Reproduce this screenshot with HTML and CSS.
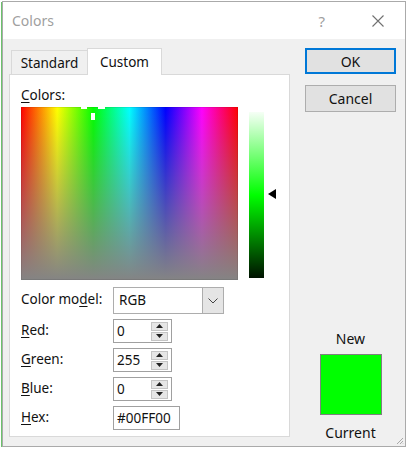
FILE: index.html
```html
<!DOCTYPE html>
<html lang="en">
<head>
  <meta charset="UTF-8">
  <title>Colors</title>
  <link rel="stylesheet" href="styles.css">
</head>
<body>

  <div class="dialog">
    <div class="titlebar">
      <span class="title">Colors</span>
      <span class="help">?</span>
      <svg class="close" width="12" height="12" viewBox="0 0 12 12">
        <path d="M0.5 0.5 L11.5 11.5 M11.5 0.5 L0.5 11.5" stroke="#707070" stroke-width="1.1" fill="none"/>
      </svg>
    </div>

    <div class="content">
      <div class="left-col">
        <div class="tabs">
          <div class="tab">Standard</div>
          <div class="tab active">Custom</div>
        </div>

        <div class="panel">
          <div class="panel-label"><u>C</u>olors:</div>

          <div class="picker">
            <div class="spectrum">
              <!-- crosshair sits at hue 120, saturation 255 -->
              <div class="cross cross-left"></div>
              <div class="cross cross-right"></div>
              <div class="cross cross-down"></div>
            </div>
            <div class="lum-wrap">
              <div class="lum-bar"></div>
              <div class="lum-arrow"></div>
            </div>
          </div>

          <div class="form">
            <label>Color mo<u>d</u>el:</label>
            <div class="select">
              <span class="select-value">RGB</span>
              <span class="select-btn">
                <svg width="10" height="6" viewBox="0 0 10 6"><path d="M0.5 0.5 L5 5 L9.5 0.5" stroke="#444" fill="none"/></svg>
              </span>
            </div>

            <label><u>R</u>ed:</label>
            <div class="spin">
              <span class="spin-value">0</span>
              <span class="spin-btns">
                <span class="spin-btn"><svg width="7" height="4" viewBox="0 0 7 4"><path d="M0 4 L3.5 0 L7 4 Z" fill="#222"/></svg></span>
                <span class="spin-btn"><svg width="7" height="4" viewBox="0 0 7 4"><path d="M0 0 L3.5 4 L7 0 Z" fill="#222"/></svg></span>
              </span>
            </div>

            <label><u>G</u>reen:</label>
            <div class="spin">
              <span class="spin-value">255</span>
              <span class="spin-btns">
                <span class="spin-btn"><svg width="7" height="4" viewBox="0 0 7 4"><path d="M0 4 L3.5 0 L7 4 Z" fill="#222"/></svg></span>
                <span class="spin-btn"><svg width="7" height="4" viewBox="0 0 7 4"><path d="M0 0 L3.5 4 L7 0 Z" fill="#222"/></svg></span>
              </span>
            </div>

            <label><u>B</u>lue:</label>
            <div class="spin">
              <span class="spin-value">0</span>
              <span class="spin-btns">
                <span class="spin-btn"><svg width="7" height="4" viewBox="0 0 7 4"><path d="M0 4 L3.5 0 L7 4 Z" fill="#222"/></svg></span>
                <span class="spin-btn"><svg width="7" height="4" viewBox="0 0 7 4"><path d="M0 0 L3.5 4 L7 0 Z" fill="#222"/></svg></span>
              </span>
            </div>

            <label><u>H</u>ex:</label>
            <div class="hex">#00FF00</div>
          </div>
        </div>
      </div>

      <div class="right-col">
        <button class="btn btn-default">OK</button>
        <button class="btn">Cancel</button>

        <div class="preview">
          <div class="preview-label">New</div>
          <div class="swatch"></div>
          <div class="preview-label">Current</div>
        </div>
      </div>
    </div>

    <svg class="grip" width="8" height="8" viewBox="0 0 8 8">
      <path d="M7 1 L1 7 M7 4 L4 7 M7 6.5 L6.5 7" stroke="#a8a8a8" stroke-width="1"/>
    </svg>
  </div>

</body>
</html>
```

FILE: styles.css
```css
body {
  margin: 0;
  background: #ffffff;
  font-family: "Noto Sans", "Open Sans", sans-serif;
  font-size: 13.5px;
  color: #111;
}
u {
  text-decoration-thickness: 1px;
  text-underline-offset: 2px;
}
.dialog {
  position: relative;
  box-sizing: border-box;
  width: 404px;
  height: 446px;
  margin: 1px 0 0 2px;
  border: 1px solid #aaaaaa;
  box-shadow: -1px 1px 0 #6cc36c;
  background: #f0f0f0;
  display: flex;
  flex-direction: column;
}
.titlebar {
  height: 37px;
  background: white;
  display: flex;
  align-items: center;
  padding-left: 9px;
}
.title {
  font-size: 14px;
  color: #a0a0a0;
  flex: 1;
}
.help {
  font-size: 15px;
  color: #a0a0a0;
  margin-right: 47px;
}
.close {
  margin-right: 21px;
}
.content {
  flex: 1;
  display: flex;
}
.left-col {
  margin-left: 6px;
  margin-top: 9px;
  width: 281px;
}
.tabs {
  display: flex;
  align-items: flex-end;
  height: 26px;
  padding-left: 2px;
}
.tab {
  box-sizing: border-box;
  height: 24px;
  width: 77px;
  border: 1px solid #d9d9d9;
  border-bottom: none;
  text-align: center;
  line-height: 24px;
}
.tab.active {
  width: 75px;
  height: 27px;
  margin-bottom: -1px;
  margin-left: -1px;
  background: white;
  position: relative;
  line-height: 26px;
}
.panel {
  box-sizing: border-box;
  height: 363px;
  background: white;
  border: 1px solid #d9d9d9;
  padding: 12px 11px 0 11px;
}
.panel-label {
  line-height: 16px;
}
.picker {
  display: flex;
  margin-top: 4px;
}
.spectrum {
  position: relative;
  overflow: hidden;
  width: 217px;
  height: 173px;
  background:
    linear-gradient(to bottom, rgba(128, 128, 128, 0), rgba(132, 132, 132, 1)),
    linear-gradient(to right, #ff0000, #ffff00 16.66%, #00ff00 33.33%, #00ffff 50%, #0000ff 66.66%, #ff00ff 83.33%, #ff0000);
  box-shadow: inset 0 0 0 1px rgba(0, 0, 0, 0.08);
}
.cross {
  position: absolute;
  background: white;
}
.cross-left {
  left: 60px;
  top: -1px;
  width: 6px;
  height: 3px;
}
.cross-right {
  left: 77px;
  top: -1px;
  width: 7px;
  height: 3px;
}
.cross-down {
  left: 70px;
  top: 6px;
  width: 4px;
  height: 7px;
}
.lum-wrap {
  position: relative;
  margin-left: 11px;
  margin-top: 5px;
}
.lum-bar {
  width: 15px;
  height: 166px;
  background: linear-gradient(to bottom, #f6fff6, #00ff00 50%, #001200);
}
.lum-arrow {
  position: absolute;
  left: 19px;
  top: 77px;
  width: 0;
  height: 0;
  border-top: 5px solid transparent;
  border-bottom: 5px solid transparent;
  border-right: 8px solid #000;
}
.form {
  display: grid;
  grid-template-columns: 92px auto;
  grid-template-rows: 27px 24px 24px 24px 24px;
  row-gap: 5px;
  align-items: center;
  justify-items: start;
  margin-top: 7px;
}
.form label {
  margin-top: -3px;
}
.select {
  box-sizing: border-box;
  width: 111px;
  height: 27px;
  border: 1px solid #adadad;
  display: flex;
}
.select-value {
  flex: 1;
  padding-left: 5px;
  line-height: 25px;
}
.select-btn {
  box-sizing: border-box;
  width: 21px;
  background: #e5e5e5;
  border-left: 1px solid #adadad;
  display: flex;
  align-items: center;
  justify-content: center;
}
.spin {
  box-sizing: border-box;
  width: 59px;
  height: 24px;
  border: 1px solid #a0a0a0;
  display: flex;
  align-items: center;
}
.spin-value {
  flex: 1;
  padding-left: 3px;
}
.spin-btns {
  display: flex;
  flex-direction: column;
  gap: 1px;
  margin-right: 3px;
}
.spin-btn {
  box-sizing: border-box;
  width: 17px;
  height: 9px;
  background: #e6e6e6;
  border: 1px solid #c4c4c4;
  display: flex;
  align-items: center;
  justify-content: center;
}
.hex {
  box-sizing: border-box;
  width: 67px;
  height: 24px;
  border: 1px solid #a0a0a0;
  padding-left: 3px;
  line-height: 22px;
}
.right-col {
  margin-left: 15px;
  width: 91px;
  padding-top: 9px;
  padding-bottom: 5px;
  display: flex;
  flex-direction: column;
}
.btn {
  box-sizing: border-box;
  width: 91px;
  height: 27px;
  background: #e1e1e1;
  border: 1px solid #adadad;
  font-family: inherit;
  font-size: 14px;
  color: #111;
  padding: 0;
}
.btn-default {
  height: 26px;
  border: 2px solid #0078d7;
  margin-bottom: 11px;
}
.preview {
  margin-top: auto;
  display: flex;
  flex-direction: column;
  align-items: center;
}
.preview-label {
  font-size: 14px;
  line-height: 16px;
}
.swatch {
  box-sizing: border-box;
  width: 62px;
  height: 61px;
  background: #00ff00;
  border: 1px solid #808080;
  margin: 7px 0 10px;
}
.grip {
  position: absolute;
  right: 1px;
  bottom: 1px;
}
```
